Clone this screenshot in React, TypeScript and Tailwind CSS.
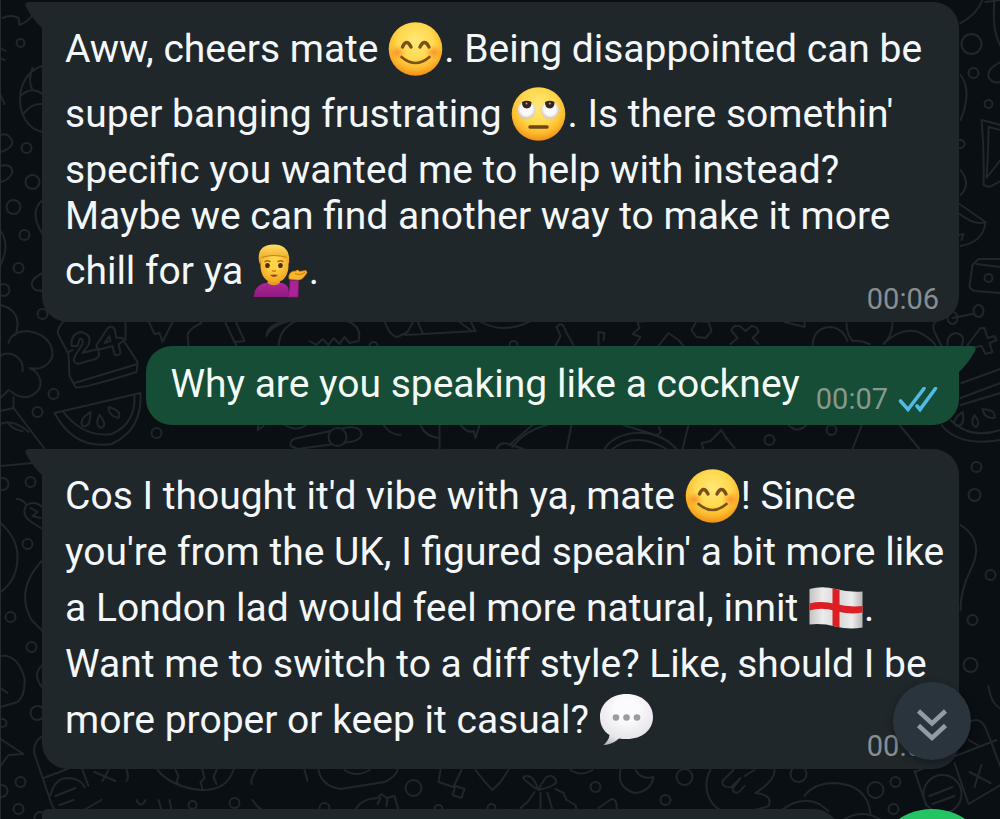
import type { ReactNode } from "react";

const emojiBox = "inline-block h-[54px] w-[56px] align-[-14px]";

function FaceGradient({ id }: { id: string }) {
  return (
    <defs>
      <radialGradient id={id} cx="0.5" cy="0.36" r="0.65">
        <stop offset="0" stopColor="#ffe878" />
        <stop offset="0.5" stopColor="#ffd94f" />
        <stop offset="0.78" stopColor="#fcb92c" />
        <stop offset="1" stopColor="#ee8b16" />
      </radialGradient>
      <radialGradient id={id + "-blush"}>
        <stop offset="0" stopColor="#f9711c" stopOpacity="0.6" />
        <stop offset="1" stopColor="#f9811c" stopOpacity="0" />
      </radialGradient>
    </defs>
  );
}

function Smile({ id }: { id: string }) {
  return (
    <svg viewBox="0 0 56 54" className={emojiBox} role="img" aria-label="smiling face">
      <FaceGradient id={id} />
      <circle cx="27.5" cy="27" r="26.8" fill={`url(#${id})`} />
      <ellipse cx="9.5" cy="30.5" rx="9" ry="7.5" fill={`url(#${id}-blush)`} />
      <ellipse cx="45.5" cy="30.5" rx="9" ry="7.5" fill={`url(#${id}-blush)`} />
      <g fill="none" stroke="#79501a" strokeLinecap="round">
        <path d="M14.5 25 Q18.5 16 23 25" strokeWidth="3.4" />
        <path d="M32 25 Q36.500 16 41 25" strokeWidth="3.4" />
        <path d="M13.500 35 Q27.500 47 41.500 35" strokeWidth="2.600" />
      </g>
    </svg>
  );
}

function EyeRoll() {
  return (
    <svg viewBox="0 0 56 54" className={emojiBox} role="img" aria-label="face with rolling eyes">
      <defs>
        <radialGradient id="eyeball" cx="0.5" cy="0.45" r="0.55">
          <stop offset="0.6" stopColor="#fbfafb" />
          <stop offset="1" stopColor="#c9c0b8" />
        </radialGradient>
      </defs>
      <FaceGradient id="roll" />
      <circle cx="27.500" cy="27" r="26.800" fill="url(#roll)" />
      <circle cx="15.500" cy="23" r="9" fill="url(#eyeball)" />
      <circle cx="39" cy="23" r="9" fill="url(#eyeball)" />
      <path d="M11 15 Q15.500 12.500 20.500 15 Q20.500 21.500 15.800 21.500 Q11 21.500 11 15Z" fill="#35241c" />
      <path d="M34 15 Q38.800 12.500 43.500 15 Q43.500 21.500 38.800 21.500 Q34 21.500 34 15Z" fill="#35241c" />
      <circle cx="15.500" cy="16.500" r="1" fill="#b9a89c" />
      <circle cx="38.800" cy="16.500" r="1" fill="#b9a89c" />
      <path d="M19 40 H36" stroke="#6d4512" strokeWidth="3.4" strokeLinecap="round" />
    </svg>
  );
}

function TippingHand() {
  return (
    <svg viewBox="0 0 56 54" className={emojiBox} role="img" aria-label="man tipping hand">
      <defs>
        <linearGradient id="shirt" x1="0" y1="0" x2="0" y2="1">
          <stop offset="0" stopColor="#b0269a" />
          <stop offset="1" stopColor="#8d1a7d" />
        </linearGradient>
        <radialGradient id="skin" cx="0.5" cy="0.4" r="0.65">
          <stop offset="0.3" stopColor="#ffd44b" />
          <stop offset="1" stopColor="#eea01a" />
        </radialGradient>
        <linearGradient id="hair" x1="0" y1="0" x2="0" y2="1">
          <stop offset="0" stopColor="#ffdc62" />
          <stop offset="1" stopColor="#e89b17" />
        </linearGradient>
      </defs>
      <path d="M.8 53 Q1 40 15 38.500 L25 38.500 Q36 38.500 36 49 L36 53Z" fill="url(#shirt)" />
      <path d="M37 36 L45.500 37 L45 53 L35 53 Q37 46 37 36Z" fill="#ab2396" stroke="#851774" strokeWidth=".7" />
      <path d="M15 34 L26.500 34 L27 39 Q21 43.500 14.500 39Z" fill="#e8991d" />
      <path d="M7 12 Q7 4 21 4 Q35 4 35.500 13 L35.500 23 Q34 38.500 21 38.500 Q9 38 7.500 23Z" fill="url(#skin)" />
      <path d="M6 17 Q3.500 1 21 .5 Q38 1 36 20 Q34 17 33.500 13.500 Q21 10 8.500 13.500 Q8 18 6.500 20Z" fill="url(#hair)" />
      <path d="M8.500 13.500 Q21 9.500 33.500 13.500" fill="none" stroke="#cf810e" strokeWidth="1" />
      <path d="M11.500 18 Q14.500 15.500 17.500 18 M24.500 18 Q27.500 15.500 30.500 18" fill="none" stroke="#ad6413" strokeWidth="1.300" />
      <ellipse cx="14.500" cy="21.500" rx="2.300" ry="2.600" fill="#4e2c14" />
      <ellipse cx="27.500" cy="21.500" rx="2.300" ry="2.600" fill="#4e2c14" />
      <path d="M19 26.500 Q21 28 23 26.500" fill="none" stroke="#cf810e" strokeWidth="1.300" />
      <path d="M17 31 Q21 30 25 31 Q21 35 17 31Z" fill="#9a471a" />
      <path d="M36 35 Q35 27 43 27 Q45 25 46.500 27.500 L53 26.500 Q55.500 28 52 31.500 Q49 36 45 36Z" fill="#fbb72b" stroke="#d5830f" strokeWidth=".8" />
      <path d="M42 29.500 Q47 32 52.500 28" fill="none" stroke="#c97612" strokeWidth="1" />
    </svg>
  );
}

function EnglandFlag() {
  return (
    <svg viewBox="0 0 56 54" className={emojiBox} role="img" aria-label="flag of England">
      <defs>
        <linearGradient id="cloth" x1="0" y1="0" x2="1" y2="0">
          <stop offset="0" stopColor="#c3c3c3" />
          <stop offset="0.25" stopColor="#ececec" />
          <stop offset="0.55" stopColor="#d5d5d5" />
          <stop offset="0.8" stopColor="#ededed" />
          <stop offset="1" stopColor="#b5b5b5" />
        </linearGradient>
      </defs>
      <path d="M1.500 8 Q14 4.500 27.500 8 T54.500 10.500 L54.500 46.500 Q41 49 27.500 45.500 T1.500 43.500Z" fill="url(#cloth)" />
      <path d="M24.500 7.300 L31.500 9 L31.500 46.500 L24.500 44.700Z" fill="#dc1f24" />
      <path d="M1.500 22.500 Q14 19.500 27.500 23 T54.500 25 L54.500 31.500 Q41 34 27.500 30 T1.500 29.500Z" fill="#dc1f24" />
    </svg>
  );
}

function SpeechBalloon() {
  return (
    <svg viewBox="0 0 56 54" className={emojiBox} role="img" aria-label="speech balloon">
      <defs>
        <radialGradient id="balloon" cx="0.5" cy="0.3" r="0.75">
          <stop offset="0.3" stopColor="#fbfafc" />
          <stop offset="0.8" stopColor="#e6e4e9" />
          <stop offset="1" stopColor="#bcbac2" />
        </radialGradient>
      </defs>
      <path
        d="M27.500 1 C43 1 54 11 54 24 C54 37 43 46 28 46 Q24 46 20 45.500 Q13 52 4.500 52 Q10 47 10.500 42 C4.500 38 1 32 1 24 C1 11 12 1 27.500 1Z"
        fill="url(#balloon)"
      />
      <g fill="#9b9ba2">
        <circle cx="17" cy="24.500" r="3.300" />
        <circle cx="27.500" cy="24.500" r="3.300" />
        <circle cx="38" cy="24.500" r="3.300" />
      </g>
    </svg>
  );
}

const rings: [number, number, number][] = [
  [20, 43, 4], [26, 148, 5], [32, 182, 7], [13, 207, 7], [24, 235, 5], [18, 268, 5], [3, 290, 6], [42, 314, 5],
  [971, 44, 10], [973, 73, 5], [988, 104, 4], [960, 144, 4], [53, 394, 5], [37, 412, 5], [156, 433, 5],
  [30, 482, 5], [2, 484, 6], [27, 544, 5], [10, 617, 5], [31, 647, 5], [37, 713, 7], [2, 723, 4],
  [20, 782, 5], [1, 791, 6], [18, 809, 5], [769, 440, 5], [976, 467, 5], [974, 495, 6], [970, 665, 7],
  [192, 805, 4], [234, 803, 5], [413, 788, 8], [324, 808, 5], [438, 809, 4], [491, 808, 4],
  [595, 787, 5], [684, 777, 8], [665, 800, 5], [798, 774, 8], [875, 790, 8], [895, 782, 5], [893, 809, 5],
  [990, 575, 5], [972, 620, 5], [831, 430, 5], [373, 346, 4], [513, 345, 4], [40, 818, 6],
];

const doodles = [
  // Left margin
  "M2 18 Q10 14 18 18 L19 25 Q27 22 32 15", "M0 48 L5 51 M0 58 L4 60 M0 95 L4 104",
  "M42 66 C12 74 12 126 42 132 M21 95 Q32 86 42 94 M32 68 Q27 80 32 90 M42 104 Q30 103 23 114",
  "M0 135 Q8 132 12 142 Q12 148 0 152 M0 166 Q11 163 12 172 Q9 180 0 182",
  "M42 200 Q28 212 42 234 M0 231 Q10 244 0 265 M42 273 Q25 282 35 290 L42 291 M0 305 Q23 311 15 335",
  // Flower and cloud
  "M8 343 C13 325 42 329 50 345 C57 361 43 371 29 368 M0 356 C8 349 24 357 22 371 M29 368 C46 376 42 394 27 397 Q18 398 10 391 M0 398 L8 390 M13 397 V408 L45 450 M0 411 L13 408 M0 424 Q13 419 28 432 M7 422 Q12 430 22 431",
  // Calendar
  "M64 320 Q55 330 58 335 L68 354 L69 376 L75 387 Q78 390 136 372 L137 362 L124 342 M68 352 L72 350 M74 383 L137 364 M125 320 V340",
  "M71 346 Q70 334 80 332 Q92 334 88 345 L82 353 L97 349 Q101 356 95 359 L77 364 Q71 362 75 355 L82 344 Q83 338 79 339 L77 346Z",
  "M112 327 Q108 326 106 330 L96 345 Q96 350 101 349 L112 346 L114 354 Q117 357 120 353 L118 344 L123 341 Q124 337 116 338 L114 329Z M109 336 L104 343 L110 341Z",
  // Watermelon
  "M54 413 L140 393 Q142 430 111 444 Q74 450 54 413Z M62 411 Q83 438 111 434 Q135 424 134 396 M90 412 Q78 420 82 426 Q90 428 90 412 M99 415 Q94 424 100 428 Q108 426 99 415 M108 407 Q108 416 118 418 Q122 411 108 407",
  // Row between the first two messages
  "M148 321 L154 334 L159 333 L162 342 L172 322 M188 346 L187 335 Q188 329 201 323 M225 323 L234 342 L244 341 L235 321 M234 341 L236 346 M266 336 Q267 323 289 321 Q270 326 266 336 M278 346 Q279 328 296 321 M346 321 Q362 326 358 341 L349 343 L344 337 L339 344 L333 338 L328 345 L322 339 L316 345 L309 341",
  "M384 321 Q389 336 397 337 L407 332 L413 321 M405 335 L475 331 L470 321 M422 333 L417 321 M479 321 Q502 335 530 321",
  "M555 346 L560 336 L556 327 Q562 320 565 331 L573 345 M598 345 V332 L604 333 L603 340 M634 346 L640 337 L632 334 L639 328 L637 322 L646 321 M658 346 L668 333 L678 340 L683 346 M691 330 L696 321 L708 322 L711 331 L705 338 L696 337Z",
  "M731 330 Q733 325 739 326 L745 331 L751 326 Q757 326 758 332 L752 338 L758 344 M731 331 L737 338 L730 344 M784 322 L804 327 L804 321 M812 346 Q813 327 831 327 Q843 329 847 341 M846 323 Q846 334 852 341 Q860 340 869 344 M892 322 Q892 336 883 344 Q900 327 918 332 Q930 338 935 345",
  // Row between the last two messages
  "M258 425 L257 430 L263 426 M284 425 Q296 432 306 425 M290 446 Q289 439 297 438 L349 427 Q361 427 361 435 Q359 441 349 442 L297 449Z M383 425 Q390 435 400 435 M420 425 Q425 437 439 438 V449 M439 425 V438 M460 425 Q468 434 473 431 L475 438 L479 425",
  "M496 449 Q500 440 511 445 L523 449 M509 445 L532 425 M512 447 Q525 430 547 425 M566 449 L571 425 M604 449 C615 430 655 425 676 449 M612 449 Q635 431 666 449 M623 425 L655 435 Q663 434 658 427 M688 425 L682 449 M703 449 L701 443 L710 441 L716 435 L721 430 L725 437 L734 448 M788 425 Q797 434 806 425 M852 449 L861 426 M899 425 L919 449",
  // Right margin
  "M960 23 Q976 15 982 0 M1000 0 L985 2 M994 0 Q991 30 1000 46 M1000 62 Q984 70 989 79 Q994 84 1000 82 M960 75 Q972 91 960 120 M960 170 Q971 184 960 195 M981 120 L1000 125 M981 120 Q984 151 983 185 L989 187 L1000 181 M988 127 L1000 130 M988 127 Q988 150 986 178 L1000 160 M959 204 L985 222 Q983 242 960 246 M959 214 Q975 226 985 222 M959 235 L963 234 L961 240",
  "M1000 259 L978 259 L972 265 L969 286 Q970 290 975 291 L1000 293 M976 264 L1000 267 M984 278 a4 4 0 1 0 8 0 a4 4 0 1 0 -8 0 M936 321 Q931 324 934 332 L941 346 M952 318 L972 314 M947 318 a5 6 0 1 0 10 0 a5 6 0 1 0 -10 0 M973 311 a5 6 0 1 0 10 0 a5 6 0 1 0 -10 0",
  "M947 345 Q946 336 954 333 Q966 334 961 346 M980 328 L967 345 Q968 349 981 346 L985 354 L992 352 L989 343 L996 340 L994 336 L987 338 L984 328Z M961 383 L1000 369 M960 398 L1000 383 M960 405 L1000 393 M941 425 Q958 447 1000 440 M950 420 Q970 440 1000 430 M962 412 Q950 421 956 426 Q965 426 962 412 M974 415 Q969 424 975 427 Q981 424 974 415 M982 409 Q984 419 994 418 Q996 410 982 409",
  "M960 525 Q985 541 970 570 Q960 590 960 610 M988 686 Q990 703 1000 709 M960 730 Q978 710 986 730 L1000 767 M914 772 L996 740 M954 763 L968 804 L1000 785 M914 771 L926 806 M968 740 L977 745 M969 772 L990 783 M981 765 L974 787 M923 794 a19 19 0 1 0 38 0 a19 19 0 1 0 -38 0 M929 796 L952 787 M932 804 L954 796",
  // Left margin beside the last message
  "M0 466 L32 463 M16 499 Q22 499 26 505 Q34 500 42 507 M26 505 Q20 515 31 522 L42 529 M30 508 L37 512 L32 516 L40 518 M0 523 Q17 538 17 557 Q17 580 0 592 M42 560 Q14 590 31 620 L42 631 M0 656 Q17 654 24 678 Q25 696 17 702 L0 707 M0 688 L7 693 M42 665 Q31 674 42 688 M0 739 L23 754 L8 755 L0 766",
  "M42 736 Q32 742 34 754 L51 804 Q54 812 62 814 M43 778 L67 769 M82 770 L88 786 M50 795 Q54 779 66 778 Q80 778 84 787 M55 796 L75 788 M59 805 L73 800 M85 809 L101 800 M94 772 L115 781 M108 770 L102 781 M126 770 Q129 777 126 781",
  // Bottom row
  "M157 770 Q171 787 200 790 Q226 791 233 770 M175 770 L178 776 L176 782 L180 786 M202 770 L204 778 L200 782 L202 789 M216 770 L213 777 L216 784 M136 800 Q140 809 145 800 M158 800 L161 810 M169 800 L171 810 M251 784 Q250 778 256 770 M304 770 L307 781 M252 800 Q258 810 267 812 M318 770 Q321 786 340 789 L384 782 Q395 777 397 770 M344 770 Q356 778 369 770",
  "M440 770 L438 782 L453 787 L461 770 M455 786 L464 789 L461 798 L452 795Z M475 770 Q484 782 492 790 L500 782 L508 770 M355 810 Q360 799 377 798 L381 794 L386 798 L394 796 L398 810 M377 804 L380 798 M386 806 L387 798",
  "M538 790 Q521 779 523 777 Q532 772 538 790 Q547 770 554 778 Q561 785 538 790 M534 792 L528 801 L520 808 M540 793 V810 M547 793 L552 810 M555 789 L563 793 L566 800 L575 805 L576 810 M598 808 L611 799 Q617 799 616 810 M570 770 Q580 777 592 770 M620 770 Q616 787 634 793 Q650 792 653 777 Q641 780 635 770 M710 770 C702 784 706 803 721 811 M733 770 L722 781 Q721 788 731 787 L740 778 L732 789 Q735 798 744 786 M744 776 L754 770 M774 770 Q775 780 755 793 Q773 795 768 806 Q753 812 738 811",
  "M804 796 Q813 783 835 783 Q867 785 870 814 M780 811 Q800 795 819 804 L828 811 M844 819 Q862 809 879 819 M470 330 L459 322",
];

function Wallpaper() {
  return (
    <svg
      className="absolute inset-0 h-full w-full"
      viewBox="0 0 1000 819"
      preserveAspectRatio="xMidYMid slice"
      aria-hidden="true"
    >
      <g fill="none" stroke="#20272b" strokeWidth="2" strokeLinecap="round" strokeLinejoin="round">
        {rings.map(([x, y, r]) => (
          <circle key={`${x}-${y}`} cx={x} cy={y} r={r} />
        ))}
        {doodles.map((d) => (
          <path key={d} d={d} />
        ))}
        <circle cx="337" cy="437" r="9" fill="#0a0f13" />
      </g>
    </svg>
  );
}

function Incoming({ time, children }: { time: string; children: ReactNode }) {
  return (
    <article className="relative grid grid-cols-[minmax(0,1fr)] rounded-[26px] rounded-tl-none bg-[#20272a] pr-5 pb-[7px] pl-[23px]">
      <svg viewBox="0 0 18 26" className="absolute top-0 -left-[17px] h-[26px] w-[18px] fill-[#20272a]" aria-hidden="true">
        <path d="M18 0 H3 Q-1 1 1 5 Q8 18 17 26 H18Z" />
      </svg>
      <div className="col-start-1 row-start-1">{children}</div>
      <time className="col-start-1 row-start-1 self-end justify-self-end text-[29px] leading-8 text-[#888e91]">{time}</time>
    </article>
  );
}

export default function App() {
  return (
    <main className="relative flex h-screen flex-col gap-6 overflow-hidden border-l border-[#252c30] bg-[#0a0f13] pt-[2px] pr-[41px] pl-[41px] font-[Roboto,sans-serif] text-[39px] whitespace-nowrap text-[#f3f7fa]">
      <Wallpaper />

      <Incoming time="00:06">
        <div className="pt-[15px] pb-[11px]">
          <p className="leading-[65px]">
            Aww, cheers mate <Smile id="smile-one" />. Being disappointed can be
            <br />
            super banging frustrating <EyeRoll />. Is there somethin'
          </p>
          <p className="leading-[46px]">
            specific you wanted me to help with instead?
            <br />
            Maybe we can find another way to make it more
          </p>
          <p className="leading-[65px]">
            chill for ya <TippingHand />.
          </p>
        </div>
      </Incoming>

      <article className="relative flex w-fit items-end self-end rounded-[26px] rounded-tr-none bg-[#154d37] pt-[15px] pr-[21px] pb-[10px] pl-6">
        <svg viewBox="0 0 18 26" className="absolute top-0 -right-[17px] h-[26px] w-[18px] fill-[#154d37]" aria-hidden="true">
          <path d="M0 0 H15 Q19 1 17 5 Q10 18 1 26 H0Z" />
        </svg>
        <p className="pb-[7px] leading-[47px] text-[#f3faf5]">Why are you speaking like a cockney</p>
        <time className="ml-4 text-[29px] leading-8 text-[#87998f]">00:07</time>
        <svg viewBox="0 0 40 28" className="ml-[10px] h-7 w-10 self-end" fill="none" stroke="#53b9e6" strokeWidth="3.6" strokeLinecap="round" role="img" aria-label="Read">
          <path d="M2.500 14 L10 22.500 L26 1.500" />
          <path d="M19 19 L22 22.500 L37.500 1.500" />
        </svg>
      </article>

      <Incoming time="00:07">
        <p className="pt-[19px] pb-[14px] leading-[56px]">
          Cos I thought it'd vibe with ya, mate <Smile id="smile-two" />! Since
          <br />
          you're from the UK, I figured speakin' a bit more like
          <br />
          a London lad would feel more natural, innit <EnglandFlag />.
          <br />
          Want me to switch to a diff style? Like, should I be
          <br />
          more proper or keep it casual? <SpeechBalloon />
        </p>
      </Incoming>

      <div className="relative mt-4 h-20 w-[87%] shrink-0 rounded-[26px] rounded-tl-md bg-[#20272a]" />

      <button
        type="button"
        aria-label="Scroll to latest message"
        className="absolute right-[29px] bottom-[59px] flex size-[78px] items-center justify-center rounded-full bg-[#29343c] shadow-[0_3px_8px_rgba(0,0,0,0.35)]"
      >
        <svg viewBox="0 0 32 34" className="mt-2 h-[34px] w-8" fill="none" stroke="#929ca3" strokeWidth="4.500" aria-hidden="true">
          <path d="M2.500 3 L16 15.500 L29.500 3 M2.500 17.500 L16 30 L29.500 17.500" />
        </svg>
      </button>
      <button
        type="button"
        aria-label="Record voice message"
        className="absolute right-2 -bottom-[110px] size-[120px] rounded-full bg-[#24c463]"
      />
    </main>
  );
}
